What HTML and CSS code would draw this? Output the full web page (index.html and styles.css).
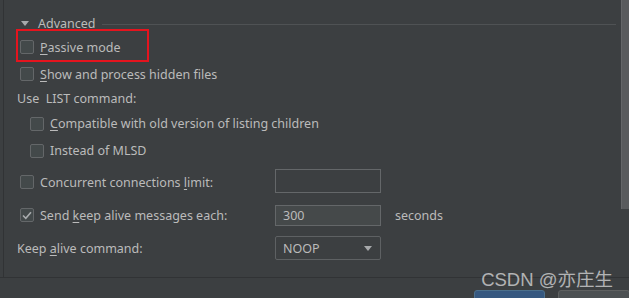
FILE: index.html
```html
<!DOCTYPE html>
<html lang="en">
<head>
    <meta charset="UTF-8">
    <title>FTP Advanced</title>
    <link rel="stylesheet" href="styles.css">
</head>
<body>
<div class="dialog">
    <div class="scroll-area">
        <div class="panel">
            <div class="section-title">
                <span class="arrow"></span>
                <span class="title-text">Advanced</span>
                <span class="title-line"></span>
            </div>

            <div class="row highlight">
                <span class="check"></span>
                <span class="label"><u>P</u>assive mode</span>
            </div>
            <div class="row">
                <span class="check"></span>
                <span class="label"><u>S</u>how and process hidden files</span>
            </div>
            <div class="row plain">
                <span class="label">Use&nbsp; LIST command:</span>
            </div>
            <div class="row sub">
                <span class="check"></span>
                <span class="label"><u>C</u>ompatible with old version of listing children</span>
            </div>
            <div class="row sub">
                <span class="check"></span>
                <span class="label">Instead of MLSD</span>
            </div>

            <div class="form-grid">
                <div class="row">
                    <span class="check"></span>
                    <span class="label">Concurrent connections <u>l</u>imit:</span>
                </div>
                <div class="field tall"></div>
                <div></div>

                <div class="row">
                    <span class="check checked">
                        <svg width="10" height="9" viewBox="0 0 10 9"><path d="M1 4.5 L3.8 7.3 L9 1.2" fill="none" stroke="#a9acae" stroke-width="1.6"/></svg>
                    </span>
                    <span class="label">Send <u>k</u>eep alive messages each:</span>
                </div>
                <div class="field filled">300</div>
                <div class="unit">seconds</div>

                <div class="row plain">
                    <span class="label">Keep <u>a</u>live command:</span>
                </div>
                <div class="field select">
                    <span>NOOP</span>
                    <span class="caret"></span>
                </div>
                <div></div>
            </div>
        </div>
        <div class="scrollbar"><div class="thumb"></div></div>
    </div>

    <div class="footer">
        <button class="btn primary"></button>
        <button class="btn"></button>
    </div>

    <div class="watermark">CSDN @亦庄生</div>
</div>
</body>
</html>
```

FILE: styles.css
```css
/* dark IDE settings panel */
body {
    margin: 0;
    background-color: #3c3f41;
    font-family: "Noto Sans", "Noto Sans CJK SC", sans-serif;
    font-size: 12.5px;
    color: #bbbbbb;
    overflow: hidden;
}
.dialog {
    position: relative;
    width: 629px;
    height: 298px;
    overflow: hidden;
}
.scroll-area {
    display: flex;
    height: 277px;
    border-bottom: 1px solid #313335;
}
.panel {
    flex: 1;
    margin-left: 3px;
    border-left: 1px solid #313335;
    padding: 16px 5px 0 13px;
}
.section-title {
    display: flex;
    align-items: center;
    height: 15px;
}
.arrow {
    width: 0;
    height: 0;
    margin-left: 4px;
    border-left: 4px solid transparent;
    border-right: 4px solid transparent;
    border-top: 5px solid #a7a9ab;
}
.title-text {
    margin-left: 9px;
}
.title-line {
    flex: 1;
    height: 1px;
    margin-left: 6px;
    margin-top: 1px;
    background-color: #4f5254;
}
.row {
    display: flex;
    align-items: center;
    height: 24px;
}
.row.highlight {
    box-sizing: border-box;
    width: 133px;
    height: 33px;
    margin-top: -2px;
    margin-left: -1px;
    padding-top: 3px;
    border: 2px solid #e5141e;
}
.row.highlight .check {
    margin-left: 2px;
}
.row.sub {
    height: 27px;
}
.row.sub .check {
    margin-left: 13px;
}
.check {
    box-sizing: border-box;
    display: flex;
    align-items: center;
    justify-content: center;
    width: 14px;
    height: 14px;
    margin-left: 3px;
    margin-right: 6px;
    border: 1px solid #646769;
    border-radius: 2px;
    background-color: #43494a;
}
.label u {
    text-decoration-thickness: 1px;
    text-underline-offset: 2px;
}
.form-grid {
    display: grid;
    grid-template-columns: 244px 106px auto;
    grid-template-rows: 34px 32px 34px;
    align-items: center;
    column-gap: 14px;
    margin-top: 1px;
}
.form-grid .row {
    height: 32px;
}
.field {
    box-sizing: border-box;
    height: 21px;
    padding-left: 7px;
    line-height: 19px;
    border: 1px solid #646769;
}
.field.tall {
    height: 24px;
    margin-top: -3px;
}
.field.filled {
    background-color: #45494a;
}
.field.select {
    display: flex;
    align-items: center;
    justify-content: space-between;
    height: 24px;
    padding-right: 8px;
    border-color: #5e6163;
    border-radius: 2px;
}
.caret {
    width: 0;
    height: 0;
    border-left: 4px solid transparent;
    border-right: 4px solid transparent;
    border-top: 5px solid #a7a9ab;
}
.scrollbar {
    width: 8px;
}
.thumb {
    height: 209px;
    background-color: #595b5d;
    border-left: 1px solid #646668;
}
.footer {
    display: flex;
    justify-content: flex-end;
    gap: 13px;
    padding-top: 12px;
    margin-right: -1px;
}
.btn {
    width: 72px;
    height: 26px;
    border: 1px solid #5e6060;
    border-radius: 3px;
    background-color: #4c5052;
}
.btn.primary {
    width: 71px;
    background-color: #365880;
    border-color: #4c708c;
}
.watermark {
    position: absolute;
    right: 16px;
    top: 265px;
    font-family: "Liberation Sans", "Noto Sans CJK SC", sans-serif;
    font-size: 18.5px;
    color: rgba(225, 225, 225, 0.72);
}
```
